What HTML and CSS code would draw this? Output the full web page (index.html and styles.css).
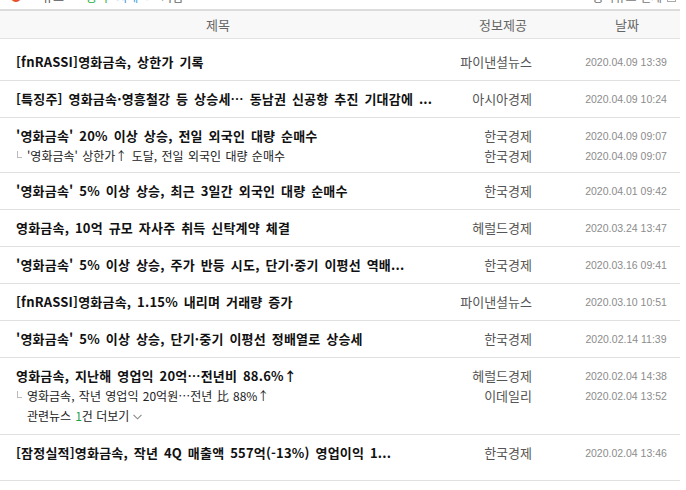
FILE: index.html
```html
<!DOCTYPE html>
<html lang="ko">
<head>
<meta charset="utf-8">
<title>영화금속 뉴스</title>
<link rel="stylesheet" href="styles.css">
</head>
<body>
<div class="crumbs">
  <div class="crumbs-left">
    <span class="c-red">●</span><span class="c-dark">뉴스</span><span class="c-green">종목</span><span class="c-multi">시세</span><span class="c-gray">&gt;</span><span class="c-dark2">기업</span>
  </div>
  <div class="crumbs-right">종목뉴스 전체 <span class="c-box"></span></div>
</div>
<div class="news">
  <div class="head">
    <div class="h-title">제목</div>
    <div class="h-prov">정보제공</div>
    <div class="h-date">날짜</div>
  </div>

  <div class="item first">
    <div class="title">[fnRASSI]영화금속, 상한가 기록</div>
    <div class="prov">파이낸셜뉴스</div>
    <div class="date">2020.04.09 13:39</div>
  </div>

  <div class="item">
    <div class="title">[특징주] 영화금속·영흥철강 등 상승세… 동남권 신공항 추진 기대감에 ...</div>
    <div class="prov">아시아경제</div>
    <div class="date">2020.04.09 10:24</div>
  </div>

  <div class="item">
    <div class="title">'영화금속' 20% 이상 상승, 전일 외국인 대량 순매수</div>
    <div class="prov">한국경제</div>
    <div class="date">2020.04.09 09:07</div>
    <div class="sub"><span class="mark"></span>'영화금속' 상한가↑ 도달, 전일 외국인 대량 순매수</div>
    <div class="prov sub-prov">한국경제</div>
    <div class="date sub-date">2020.04.09 09:07</div>
  </div>

  <div class="item">
    <div class="title">'영화금속' 5% 이상 상승, 최근 3일간 외국인 대량 순매수</div>
    <div class="prov">한국경제</div>
    <div class="date">2020.04.01 09:42</div>
  </div>

  <div class="item">
    <div class="title">영화금속, 10억 규모 자사주 취득 신탁계약 체결</div>
    <div class="prov">헤럴드경제</div>
    <div class="date">2020.03.24 13:47</div>
  </div>

  <div class="item">
    <div class="title">'영화금속' 5% 이상 상승, 주가 반등 시도, 단기·중기 이평선 역배...</div>
    <div class="prov">한국경제</div>
    <div class="date">2020.03.16 09:41</div>
  </div>

  <div class="item">
    <div class="title">[fnRASSI]영화금속, 1.15% 내리며 거래량 증가</div>
    <div class="prov">파이낸셜뉴스</div>
    <div class="date">2020.03.10 10:51</div>
  </div>

  <div class="item">
    <div class="title">'영화금속' 5% 이상 상승, 단기·중기 이평선 정배열로 상승세</div>
    <div class="prov">한국경제</div>
    <div class="date">2020.02.14 11:39</div>
  </div>

  <div class="item">
    <div class="title">영화금속, 지난해 영업익 20억…전년비 88.6%↑</div>
    <div class="prov">헤럴드경제</div>
    <div class="date">2020.02.04 14:38</div>
    <div class="sub"><span class="mark"></span>영화금속, 작년 영업익 20억원…전년 比 88%↑</div>
    <div class="prov sub-prov">이데일리</div>
    <div class="date sub-date">2020.02.04 13:52</div>
    <div class="related">관련뉴스 <em>1</em>건 더보기 <svg class="chev" width="9" height="6" viewBox="0 0 9 6"><path d="M0.5 0.8 L4.5 4.8 L8.5 0.8" fill="none" stroke="#888" stroke-width="1.1"/></svg></div>
  </div>

  <div class="item last">
    <div class="title">[잠정실적]영화금속, 작년 4Q 매출액 557억(-13%) 영업이익 1...</div>
    <div class="prov">한국경제</div>
    <div class="date">2020.02.04 13:46</div>
  </div>
</div>
</body>
</html>
```

FILE: styles.css
```css
html, body {
  margin: 0;
  padding: 0;
  background: #fff;
}
body {
  width: 686px;
  font-family: "Noto Sans CJK KR", "Liberation Sans", sans-serif;
  color: #333;
}

.crumbs {
  height: 9px;
  width: 680px;
  overflow: hidden;
  display: flex;
  justify-content: space-between;
  align-items: flex-start;
  font-size: 12px;
  line-height: 12px;
}
.crumbs-left, .crumbs-right {
  margin-top: -9px;
  display: flex;
  align-items: center;
  gap: 8px;
  white-space: nowrap;
}
.crumbs-left { padding-left: 10px; }
.crumbs-right { color: #777; gap: 5px; padding-right: 4px; }
.c-red { color: #e8502c; }
.c-dark { color: #555; margin-left: 12px; }
.c-green { color: #2db34a; margin-left: 14px; }
.c-multi { color: #3aa0d8; }
.c-gray { color: #bbb; }
.c-dark2 { color: #666; }
.c-box {
  display: inline-block;
  width: 7px;
  height: 7px;
  border: 1px solid #aaa;
}

.news {
  width: 680px;
}

.head {
  display: grid;
  grid-template-columns: 436px 138px 106px;
  height: 27px;
  align-items: center;
  background: #f8f8f8;
  border-top: 2px solid #dcdcdc;
  border-bottom: 1px solid #e2e2e2;
  font-size: 13px;
  color: #666;
  text-align: center;
  line-height: 27px;
}
.head .h-prov { padding-right: 4px; }

.item {
  display: grid;
  grid-template-columns: 436px 138px 106px;
  grid-auto-rows: auto;
  padding: 7px 0;
  border-bottom: 1px solid #e0e0e0;
  align-items: center;
}
.item.first { padding-top: 12px; }
.item.last { padding-bottom: 16px; }

.title {
  grid-column: 1;
  padding-left: 16px;
  font-size: 13px;
  font-weight: bold;
  color: #111;
  line-height: 22px;
  height: 22px;
  white-space: nowrap;
  overflow: hidden;
  word-spacing: 2px;
  letter-spacing: 0.2px;
}

.prov {
  grid-column: 2;
  text-align: right;
  padding-right: 42px;
  font-size: 13px;
  color: #555;
  line-height: 22px;
  white-space: nowrap;
}
.date {
  grid-column: 3;
  text-align: center;
  font-family: "Liberation Sans", "DejaVu Sans", sans-serif;
  font-size: 10.5px;
  color: #8c8c8c;
  line-height: 22px;
  padding-right: 2px;
  white-space: nowrap;
}

.sub {
  grid-column: 1;
  padding-left: 17px;
  font-size: 12px;
  color: #222;
  line-height: 18px;
  display: flex;
  align-items: center;
  white-space: nowrap;
  word-spacing: 1px;
}
.sub-prov, .sub-date { line-height: 18px; }

.mark {
  display: inline-block;
  width: 4px;
  height: 6px;
  border-left: 1px solid #bbb;
  border-bottom: 1px solid #bbb;
  margin-right: 5px;
  margin-top: -3px;
}

.related {
  grid-column: 1;
  padding-left: 27px;
  font-size: 12px;
  color: #222;
  line-height: 22px;
  display: flex;
  align-items: center;
  white-space: nowrap;
}
.related em {
  font-style: normal;
  color: #1aa34a;
  margin-left: 4px;
}
.related .chev {
  margin-left: 4px;
  margin-top: 1px;
}
```
